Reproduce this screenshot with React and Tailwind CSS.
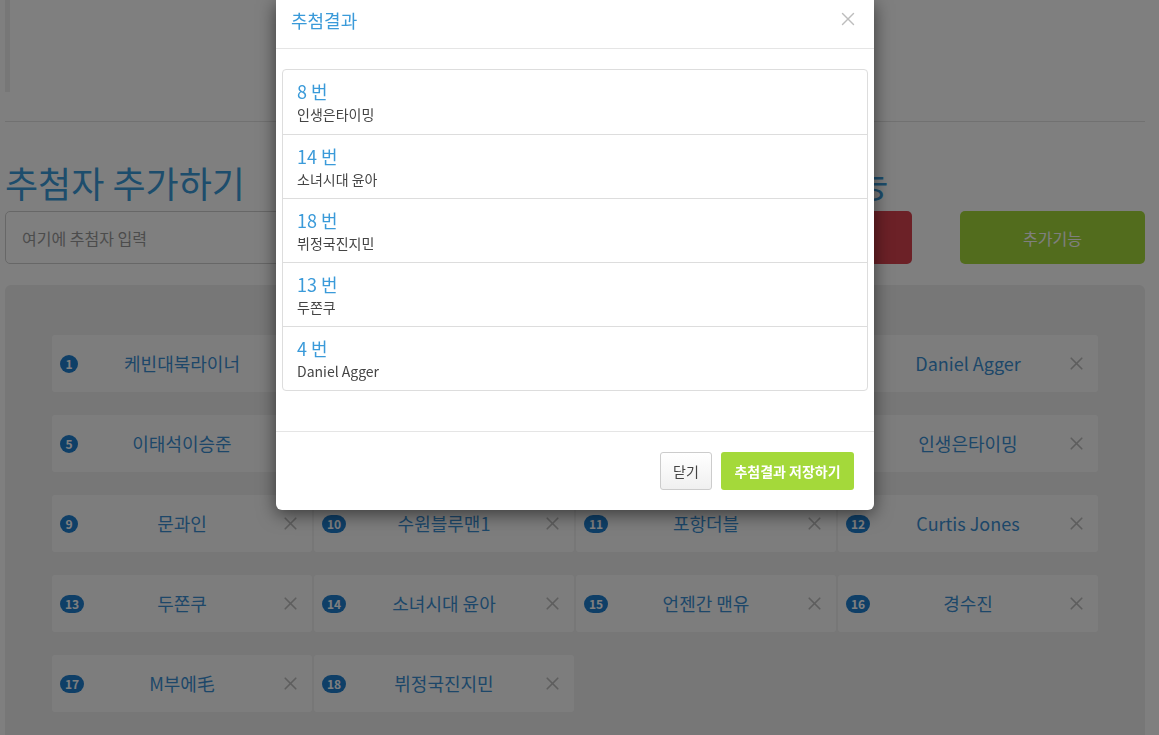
import { X } from 'lucide-react'

const people = [
  '케빈대북라이너', '호날두팬클럽', '강남스타일', 'Daniel Agger',
  '이태석이승준', '박지성사랑', '레알마드리드', '인생은타이밍',
  '문과인', '수원블루맨1', '포항더블', 'Curtis Jones',
  '두쫀쿠', '소녀시대 윤아', '언젠간 맨유', '경수진',
  'M부에毛', '뷔정국진지민',
]

const results = [
  { no: 8, name: '인생은타이밍' },
  { no: 14, name: '소녀시대 윤아' },
  { no: 18, name: '뷔정국진지민' },
  { no: 13, name: '두쫀쿠' },
  { no: 4, name: 'Daniel Agger' },
]

function PersonCard({ index, name }) {
  return (
    <div className="relative flex h-[57px] items-center rounded-[3px] bg-[#fbfbfb]">
      <span className="absolute left-[8px] flex h-[18px] min-w-[18px] items-center justify-center rounded-full bg-[#1f7fcf] px-[5px] text-[12px] font-bold text-white">
        {index}
      </span>
      <span className="flex-1 text-center text-[18px] text-[#3a8fd3]">{name}</span>
      <X className="absolute right-[11px] h-[21px] w-[21px] text-[#bdbdbd]" strokeWidth={2} />
    </div>
  )
}

export default function App() {
  return (
    <div className="relative min-h-[735px] bg-white" style={{ fontFamily: '"Noto Sans CJK KR", "Noto Sans", sans-serif' }}>
      {/* page behind the dialog */}
      <div className="ml-[5px] w-[1140px]">
        <div className="h-[92px] w-[5px] bg-[#efefef]" />
        <div className="mt-[29px] border-t border-[#e2e2e2]" />

        <div className="mt-[40px] flex items-center">
          <h1 className="text-[36px] leading-[40px] text-[#3a9ad9]">추첨자 추가하기</h1>
          <h1 className="ml-[503px] text-[36px] leading-[40px] text-[#3a9ad9]">추첨 기능</h1>
        </div>

        <div className="mt-[9px] flex h-[53px] gap-[48px]">
          <input
            className="h-full flex-1 rounded-[5px] border border-[#cfcfcf] px-[16px] text-[16px] outline-none placeholder:text-[#999]"
            placeholder="여기에 추첨자 입력"
          />
          <button className="h-full w-[185px] rounded-[5px] bg-[#d9434e] text-[16px] text-white">추첨하기</button>
          <button className="h-full w-[185px] rounded-[5px] bg-[#a4d93a] text-[16px] text-white">추가기능</button>
        </div>

        <div className="mt-[21px] rounded-[6px] bg-[#eeeeee] px-[47px] pb-[40px] pt-[50px]">
          <div className="grid grid-cols-4 gap-x-[2px] gap-y-[23px]">
            {people.map((name, i) => (
              <PersonCard key={i} index={i + 1} name={name} />
            ))}
          </div>
        </div>
      </div>

      {/* backdrop */}
      <div className="fixed inset-0 bg-black/50" />

      {/* dialog */}
      <div className="fixed left-[276px] top-0 w-[598px] rounded-b-[6px] bg-white shadow-[0_4px_18px_rgba(0,0,0,0.55)]">
        <div className="flex h-[49px] items-start justify-between border-b border-[#e5e5e5] pl-[15px] pr-[15px] pt-[8px]">
          <span className="text-[18px] leading-[24px] text-[#3a9ad9]">추첨결과</span>
          <X className="h-[22px] w-[22px] text-[#bdbdbd]" strokeWidth={1.5} />
        </div>

        <div className="px-[6px] pb-[40px] pt-[20px]">
          <div className="rounded-[4px] border border-[#dddddd]">
            {results.map((r, i) => (
              <div key={i} className={'h-[64px] px-[14px] pt-[9px] ' + (i > 0 ? 'border-t border-[#dddddd]' : '')}>
                <div className="text-[18px] leading-[24px] text-[#3a9ad9]">{r.no} 번</div>
                <div className="mt-[1px] text-[14px] leading-[20px] text-[#444]">{r.name}</div>
              </div>
            ))}
          </div>
        </div>

        <div className="flex justify-end gap-[9px] border-t border-[#e5e5e5] px-[20px] pb-[20px] pt-[20px]">
          <button className="h-[38px] w-[52px] rounded-[3px] border border-[#cccccc] bg-gradient-to-b from-white to-[#f0f0f0] text-[14px] text-[#444]">
            닫기
          </button>
          <button className="h-[38px] w-[133px] rounded-[3px] bg-[#a4d93a] text-[14px] font-bold text-white">
            추첨결과 저장하기
          </button>
        </div>
      </div>
    </div>
  )
}
